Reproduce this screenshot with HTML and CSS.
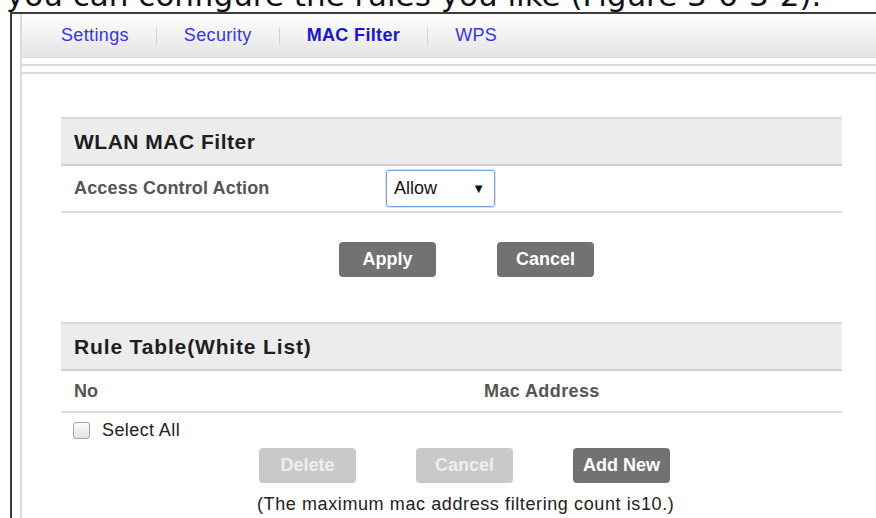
FILE: index.html
```html
<!DOCTYPE html>
<html lang="en">
<head>
<meta charset="utf-8">
<title>MAC Filter</title>
<link rel="stylesheet" href="styles.css">
</head>
<body>
<div class="caption"><span>you can configure the rules you like (Figure 3-6-3-2).</span></div>
<div class="frame">
  <div class="panel">
    <div class="tabbar">
      <nav class="tabs">
        <a class="tab">Settings</a>
        <span class="sep"></span>
        <a class="tab">Security</a>
        <span class="sep"></span>
        <a class="tab active">MAC Filter</a>
        <span class="sep"></span>
        <a class="tab">WPS</a>
      </nav>
    </div>
    <div class="content">
      <section class="section">
        <div class="sec-head">WLAN MAC Filter</div>
        <div class="row">
          <div class="label">Access Control Action</div>
          <div class="select"><span>Allow</span><span class="arrow">&#9660;</span></div>
        </div>
      </section>
      <div class="actions">
        <button class="btn">Apply</button>
        <button class="btn">Cancel</button>
      </div>
      <section class="section rules">
        <div class="sec-head">Rule Table(White List)</div>
        <div class="row cols">
          <div class="col-no">No</div>
          <div class="col-mac">Mac Address</div>
        </div>
        <label class="select-all"><span class="check"></span>Select All</label>
        <div class="actions small">
          <button class="btn disabled">Delete</button>
          <button class="btn disabled">Cancel</button>
          <button class="btn">Add New</button>
        </div>
        <p class="note">(The maximum mac address filtering count is10.)</p>
      </section>
    </div>
  </div>
</div>
</body>
</html>
```
FILE: styles.css
```css
html, body {
  margin: 0;
  padding: 0;
  background: #fff;
}

body {
  width: 876px;
  height: 518px;
  overflow: hidden;
  font-family: "Liberation Sans", Arial, sans-serif;
  color: #222;
}

/* document caption line above the screen capture */
.caption {
  height: 12px;
  overflow: hidden;
}
.caption span {
  display: block;
  margin-top: -23px;
  padding-left: 6px;
  font-family: "DejaVu Sans", Verdana, sans-serif;
  font-size: 31px;
  line-height: 36px;
  white-space: nowrap;
  color: #111;
}

/* outer window edge */
.frame {
  margin-left: 10px;
  height: 506px;
  border-top: 2px solid #3d3d3d;
  border-left: 2px solid #3d3d3d;
}

.panel {
  margin-left: 8px;
  height: 100%;
  border-left: 2px solid #dadada;
}

/* tab strip */
.tabbar {
  padding-bottom: 6px;
  border-bottom: 2px solid #dcdcdc;
}
.tabs {
  display: flex;
  align-items: center;
  height: 43px;
  padding-left: 39px;
  background: linear-gradient(#ffffff, #e4e4e4);
  border-bottom: 1px solid #d8d8d8;
}
.tab {
  font-size: 18px;
  color: #3434ee;
  letter-spacing: 0.35px;
  cursor: pointer;
}
.tab.active {
  font-weight: bold;
  color: #1414dc;
}
.sep {
  width: 1px;
  height: 16px;
  margin: 0 27px;
  background: #cfcfcf;
}

/* page body */
.content {
  margin-top: 6px;
  height: 420px;
  border-top: 2px solid #dcdcdc;
  padding: 43px 34px 0 39px;
}

.section {
  display: flex;
  flex-direction: column;
}

.sec-head {
  display: flex;
  align-items: center;
  height: 45px;
  padding-left: 13px;
  background: #ececec;
  border-top: 2px solid #dadada;
  border-bottom: 2px solid #d2d2d2;
  font-size: 21px;
  font-weight: bold;
  letter-spacing: 0.5px;
  color: #1e1e1e;
}
.rules .sec-head {
  letter-spacing: 0.85px;
}

.row {
  display: flex;
  align-items: center;
  height: 45px;
  border-bottom: 2px solid #dcdcdc;
}
.label {
  width: 312px;
  padding-left: 13px;
  font-size: 18px;
  font-weight: bold;
  letter-spacing: 0.15px;
  color: #555;
}

.select {
  display: flex;
  align-items: center;
  justify-content: space-between;
  box-sizing: border-box;
  width: 109px;
  height: 37px;
  padding: 0 9px 0 7px;
  border: 1px solid #78a2e4;
  border-radius: 3px;
  box-shadow: 0 0 0 1px #d4e2f7;
  font-size: 18px;
  color: #111;
}
.arrow {
  font-size: 13px;
}

/* buttons */
.actions {
  display: flex;
  gap: 61px;
  margin-top: 29px;
  padding-left: 278px;
}
.btn {
  width: 97px;
  height: 35px;
  padding: 0;
  border: none;
  border-radius: 4px;
  background: #727272;
  color: #fff;
  font-family: "Liberation Sans", Arial, sans-serif;
  font-size: 18px;
  font-weight: bold;
}
.btn.disabled {
  background: #c9c9c9;
  color: #eeeeee;
}

/* rule table */
.rules {
  margin-top: 45px;
}
.sec-head + .cols {
  height: 40px;
}
.col-no {
  width: 410px;
  padding-left: 13px;
  font-size: 18px;
  font-weight: bold;
  color: #555;
}
.col-mac {
  font-size: 18px;
  font-weight: bold;
  letter-spacing: 0.4px;
  color: #555;
}

.select-all {
  display: flex;
  align-items: center;
  gap: 12px;
  margin-top: 7px;
  padding-left: 12px;
  font-size: 18px;
  letter-spacing: 0.4px;
  color: #222;
}
.check {
  box-sizing: border-box;
  width: 17px;
  height: 17px;
  border: 1px solid #a3a3a3;
  border-radius: 3px;
  background: linear-gradient(#fcfcfc, #e2e2e2);
}

.actions.small {
  margin-top: 7px;
  gap: 60px;
  padding-left: 198px;
}

.note {
  margin: 11px 0 0;
  padding-left: 196px;
  font-size: 18px;
  letter-spacing: 0.6px;
  color: #222;
  white-space: nowrap;
}
```
